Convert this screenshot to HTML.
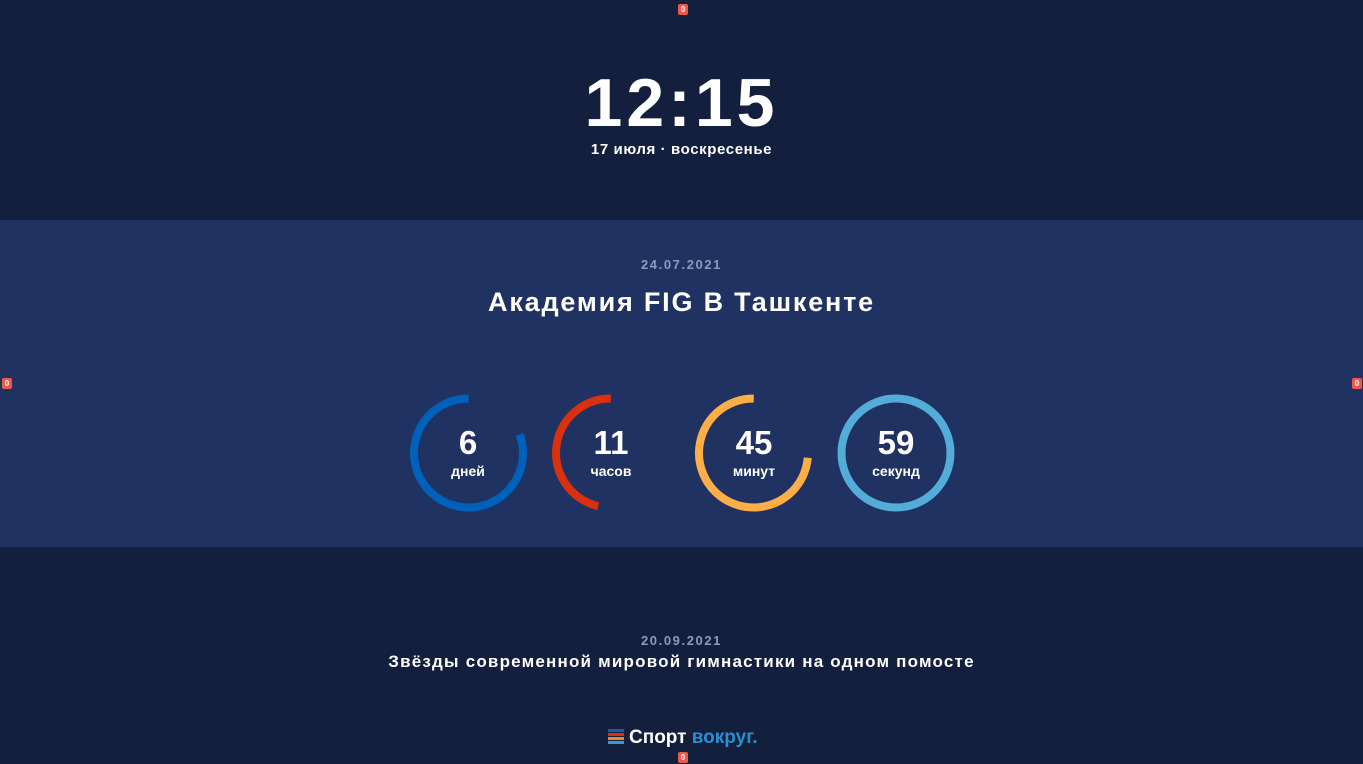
<!DOCTYPE html>
<html><head><meta charset="utf-8"><style>
*{margin:0;padding:0;box-sizing:border-box}
body{width:1363px;height:764px;background:#131f3d;font-family:"Liberation Sans",sans-serif;color:#fff;position:relative;overflow:hidden;font-weight:bold}
.abs{position:absolute}
.c{left:0;width:1363px;text-align:center}
.band{position:absolute;left:0;top:220px;width:1363px;height:327px;background:#1f3262}
.badge{position:absolute;background:#f0574a;color:#fff;font-size:8px;width:10px;height:11px;line-height:11px;text-align:center;border-radius:2px}
.num{position:absolute;width:120px;text-align:center;font-size:33px;top:424px}
.lbl{position:absolute;width:120px;text-align:center;font-size:14px;top:463px}
</style></head><body>
<div class="abs c" style="top:64px;font-size:68px;letter-spacing:4px">12:15</div>
<div class="abs c" style="top:141px;font-size:15px;letter-spacing:0.6px">17 июля · воскресенье</div>
<div class="band"></div>
<div class="abs c" style="top:257px;font-size:13px;color:#8d9bbd;letter-spacing:1.6px">24.07.2021</div>
<div class="abs c" style="top:287px;font-size:27px;letter-spacing:1.8px">Академия FIG В Ташкенте</div>
<svg class="abs" style="left:0;top:0" width="1363" height="764">
<g fill="none" stroke-width="8">
<circle cx="468.5" cy="453" r="54.5" stroke="#0061bb" stroke-dasharray="275.8 400" transform="rotate(-20 468.5 453)"/>
<circle cx="610.5" cy="453" r="54.5" stroke="#d9300e" stroke-dasharray="159 400" transform="rotate(103 610.5 453)"/>
<circle cx="753.5" cy="453" r="54.5" stroke="#fdae47" stroke-dasharray="252 400" transform="rotate(5 753.5 453)"/>
<circle cx="896" cy="453" r="54.5" stroke="#54acd9"/>
</g></svg>
<div class="num" style="left:408px">6</div><div class="lbl" style="left:408px">дней</div>
<div class="num" style="left:551px">11</div><div class="lbl" style="left:551px">часов</div>
<div class="num" style="left:694px">45</div><div class="lbl" style="left:694px">минут</div>
<div class="num" style="left:836px">59</div><div class="lbl" style="left:836px">секунд</div>
<div class="abs c" style="top:633px;font-size:13px;color:#8d9bbd;letter-spacing:1.6px">20.09.2021</div>
<div class="abs c" style="top:652px;font-size:17px;letter-spacing:1.2px">Звёзды современной мировой гимнастики на одном помосте</div>
<div class="abs" style="left:608px;top:729px;width:16px">
<div style="height:3px;background:#1e5aa8"></div><div style="height:3px;background:#d9300e;margin-top:1px"></div><div style="height:3px;background:#e48a2c;margin-top:1px"></div><div style="height:3px;background:#3a9ad9;margin-top:1px"></div></div>
<div class="abs" style="left:629px;top:727px;font-size:19px;color:#fff">Спорт <span style="color:#2a8fd0">вокруг.</span></div>
<div class="badge" style="left:678px;top:4px">0</div>
<div class="badge" style="left:2px;top:378px">0</div>
<div class="badge" style="left:1352px;top:378px">0</div>
<div class="badge" style="left:678px;top:752px">0</div>
</body></html>
